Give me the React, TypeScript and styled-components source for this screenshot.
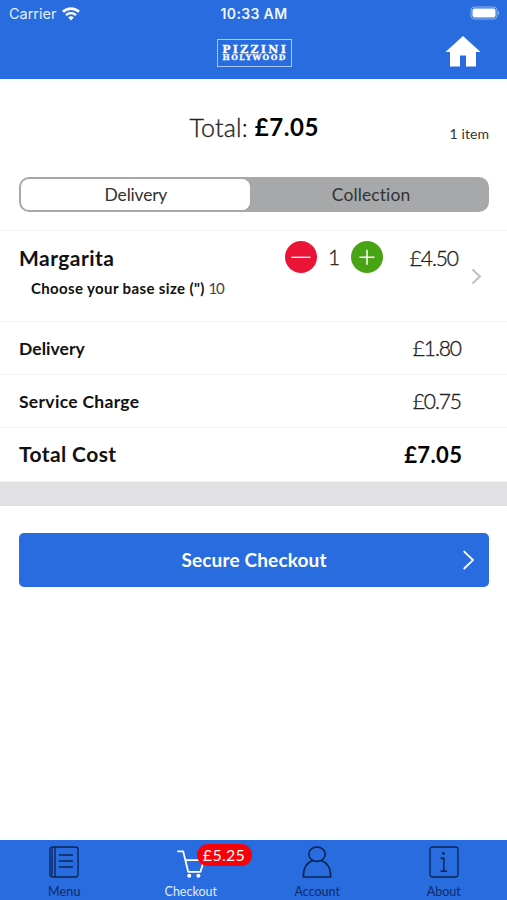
import React from "react";
import styled, { createGlobalStyle } from "styled-components";

const blue = "#286cdf";

const GlobalStyle = createGlobalStyle`
  * { box-sizing: border-box; }
  body { margin: 0; background: #fff; font-family: Lato, "Open Sans", sans-serif; color: #111; }
  button { font: inherit; color: inherit; border: 0; padding: 0; background: none; }
`;

const Screen = styled.div`
  width: 507px;
  height: 900px;
  display: flex;
  flex-direction: column;
  overflow: hidden;
`;

const Header = styled.header`
  height: 79px;
  background: ${blue};
  color: #fff;
`;

const StatusBar = styled.div`
  height: 27px;
  display: grid;
  grid-template-columns: 1fr auto 1fr;
  align-items: center;
  padding: 0 7px 0 9px;
  font: 500 14.5px/27px Inter, sans-serif;
`;

const Carrier = styled.span`
  display: flex;
  align-items: center;
  gap: 6px;
  font-weight: 400;
  letter-spacing: -0.02px;
  color: #e6effd;
`;

const Clock = styled.span`
  font-weight: 600;
  font-size: 14px;
  letter-spacing: 0.35px;
  margin-right: 1px;
  color: #f0f5ff;
`;

const Battery = styled.svg`
  justify-self: end;
  margin-top: -1px;
`;

const TitleBar = styled.div`
  height: 52px;
  display: grid;
  grid-template-columns: 1fr auto 1fr;
  align-items: start;
  padding: 8px 26px 0 27px;
`;

const Logo = styled.div`
  grid-column: 2;
  width: 75px;
  height: 28px;
  margin-top: 4px;
  border: 1px solid #a9c8fa;
  display: flex;
  flex-direction: column;
  align-items: center;
  padding-top: 5px;
  font-family: "DejaVu Serif", serif;
  font-weight: 700;
  white-space: nowrap;
  -webkit-text-stroke: 0.3px #fff;
`;

const LogoLine = styled.span<{ $size: number; $spacing: number; $height: number }>`
  font-size: ${(p) => p.$size}px;
  line-height: ${(p) => p.$height}px;
  letter-spacing: ${(p) => p.$spacing}px;
  margin-right: ${(p) => -p.$spacing}px;
`;

const HomeButton = styled.button`
  justify-self: end;
  width: 36px;
  height: 33px;
`;

const Summary = styled.div`
  height: 98px;
  display: grid;
  grid-template-columns: 1fr auto 1fr;
  padding: 34px 18px 0 19px;
`;

const Label = styled.span<{ $size: number; $weight?: number; $spacing?: number; $line?: number; $color?: string }>`
  font-size: ${(p) => p.$size}px;
  font-weight: ${(p) => p.$weight ?? 400};
  letter-spacing: ${(p) => p.$spacing ?? 0}px;
  margin-right: ${(p) => -(p.$spacing ?? 0)}px;
  line-height: ${(p) => p.$line ?? 28}px;
  color: ${(p) => p.$color ?? "#111"};
  white-space: nowrap;
`;

const LightLabel = styled(Label)`
  font-weight: 300;
  -webkit-text-stroke: 0.35px currentColor;
`;

const SummaryTotal = styled.div`
  grid-column: 2;
  display: flex;
  gap: 7px;
`;

const ItemCount = styled.div`
  justify-self: end;
  padding-top: 7px;
`;

const Segments = styled.div`
  height: 35px;
  margin: 0 18px 0 19px;
  padding: 2px;
  display: grid;
  grid-template-columns: 229px 1fr;
  border-radius: 10px;
  background: #a7a8aa;
`;

const Segment = styled.button<{ $active?: boolean }>`
  border-radius: 8px;
  padding-top: 1px;
  padding-left: ${(p) => (p.$active ? 1 : 5)}px;
  background: ${(p) => (p.$active ? "#fff" : "transparent")};
`;

const Basket = styled.section`
  margin-top: 18px;
  border-top: 1px solid #f2f2f2;
`;

const ItemRow = styled.div`
  height: 91px;
  display: grid;
  grid-template-columns: 1fr 98px 76px 23px;
  padding: 0 25px 0 19px;
  border-bottom: 1px solid #f2f2f2;
`;

const ItemText = styled.div`
  display: flex;
  flex-direction: column;
  padding-top: 13px;
`;

const Option = styled.div`
  display: flex;
  gap: 4px;
  padding: 3px 0 0 12px;
`;

const Stepper = styled.div`
  display: flex;
  align-items: center;
  justify-content: space-between;
  height: 32px;
  margin-top: 10px;
`;

const RoundButton = styled.button<{ $color: string }>`
  width: 32px;
  height: 32px;
  border-radius: 50%;
  background: ${(p) => p.$color};
`;

const ItemPrice = styled.div`
  justify-self: end;
  padding-top: 13px;
`;

const RowChevron = styled.svg`
  justify-self: end;
  margin-top: 37px;
`;

const CostRow = styled.div<{ $height: number }>`
  height: ${(p) => p.$height}px;
  display: flex;
  align-items: center;
  justify-content: space-between;
  padding: 0 45px 0 19px;
  border-bottom: 1px solid #f2f2f2;
`;

const CostName = styled(Label)`
  padding-top: 1px;
`;

const TotalName = styled(Label)`
  padding-bottom: 1px;
`;

const Divider = styled.div`
  height: 24px;
  background: #e1e1e3;
`;

const CheckoutButton = styled.button`
  height: 54px;
  margin: 27px 18px 0 19px;
  padding: 0 14px;
  display: grid;
  grid-template-columns: 1fr auto 1fr;
  align-items: center;
  border-radius: 5px;
  background: ${blue};
`;

const ButtonLabel = styled(Label)`
  grid-column: 2;
`;

const ButtonChevron = styled.svg`
  justify-self: end;
`;

const TabBar = styled.nav`
  height: 60px;
  margin-top: auto;
  display: grid;
  grid-template-columns: repeat(4, 1fr);
  padding: 0 0 0 1px;
  background: ${blue};
`;

const Tab = styled.button<{ $active?: boolean }>`
  position: relative;
  display: flex;
  flex-direction: column;
  align-items: center;
  padding-top: 6px;
  color: ${(p) => (p.$active ? "#fff" : "#0b2454")};
`;

const TabLabel = styled.span<{ $spacing: number }>`
  margin-top: 6px;
  font-size: 12.5px;
  line-height: 16px;
  letter-spacing: ${(p) => p.$spacing}px;
  margin-right: ${(p) => -p.$spacing}px;
  opacity: 0.88;
`;

const Badge = styled.span`
  position: absolute;
  left: 69px;
  top: 4px;
  width: 55px;
  height: 22px;
  border-radius: 11px;
  background: #f80008;
  color: #fff;
  font-size: 16px;
  line-height: 21px;
  letter-spacing: 0.3px;
  text-align: center;
`;

const WifiIcon = () => (
  <svg width="18" height="14" viewBox="0 0 18 14" fill="none" stroke="#fff">
    <path d="M1 4.7a11.7 11.7 0 0 1 16 0" strokeWidth="2.7" />
    <path d="M4 8.1a7.3 7.3 0 0 1 10 0" strokeWidth="2.4" />
    <path d="M6.2 10.6 9 13.6 11.8 10.6a4.2 4.2 0 0 0-5.6 0Z" fill="#fff" stroke="none" />
  </svg>
);

const MenuIcon = () => (
  <svg width="30" height="32" viewBox="0 0 30 32" fill="none" stroke="currentColor" strokeWidth="1.3" strokeLinecap="round">
    <rect x="1" y="1" width="28" height="30" rx="2.5" />
    <path d="M3 3v26M6 1v30M10.5 9h13M10.5 15h13M10.5 21h13" />
  </svg>
);

const CartIcon = () => (
  <svg width="30" height="32" viewBox="0 0 30 32" fill="none" stroke="currentColor" strokeWidth="1.8" strokeLinejoin="round">
    <path d="M1.3 5.4h5.9l5 20.4h12.2l4-12.1M8.9 14.2h18" />
    <circle cx="13.2" cy="29.8" r="2" fill="currentColor" stroke="none" />
    <circle cx="22.4" cy="29.8" r="2" fill="currentColor" stroke="none" />
  </svg>
);

const AccountIcon = () => (
  <svg width="30" height="32" viewBox="0 0 30 32" fill="none" stroke="currentColor" strokeWidth="1.6" strokeLinejoin="round">
    <ellipse cx="15" cy="8.2" rx="8.2" ry="7.2" />
    <path d="M10.8 14.4C4.5 16.4 1.3 21 1.3 31h27.4c0-10-3.2-14.6-9.5-16.6" />
  </svg>
);

const AboutIcon = () => (
  <svg width="30" height="32" viewBox="0 0 30 32" fill="none" stroke="currentColor" strokeWidth="1.3">
    <rect x="1" y="1" width="28" height="30" rx="2.5" />
    <path d="M11.5 12.3h3.3v12.9M11.5 25.2h6.6" strokeWidth="1.5" />
    <circle cx="14.4" cy="7.4" r="1.4" fill="currentColor" stroke="none" />
  </svg>
);

const costs = [
  { name: "Delivery", price: "£1.80", height: 53, spacing: 0.05 },
  { name: "Service Charge", price: "£0.75", height: 53, spacing: 0.3 },
];

export default function App() {
  return (
    <Screen>
      <GlobalStyle />
      <Header>
        <StatusBar>
          <Carrier>Carrier <WifiIcon /></Carrier>
          <Clock>10:33 AM</Clock>
          <Battery width="30" height="14" viewBox="0 0 30 14">
            <rect x="1" y="1" width="26" height="12" rx="3.5" fill="none" stroke="#94b8f3" />
            <rect x="2.5" y="2.5" width="23" height="9" rx="2" fill="#fff" />
            <path d="M28 4.5q2 2.5 0 5z" fill="#94b8f3" />
          </Battery>
        </StatusBar>
        <TitleBar>
          <Logo>
            <LogoLine $size={11} $spacing={2.3} $height={9}>PIZZINI</LogoLine>
            <LogoLine $size={7.6} $spacing={1.5} $height={8}>HOLYWOOD</LogoLine>
          </Logo>
          <HomeButton aria-label="Home">
            <svg width="36" height="33" viewBox="0 0 36 33" fill="#fff">
              <path d="M18 1 35.5 17H31v14.5H21V20.5h-6v11H5V17H.5Z" />
            </svg>
          </HomeButton>
        </TitleBar>
      </Header>

      <Summary>
        <SummaryTotal>
          <LightLabel $size={25} $spacing={0.2} $color="#222">Total:</LightLabel>
          <Label $size={24} $weight={700} $spacing={0.6} $color="#000">£7.05</Label>
        </SummaryTotal>
        <ItemCount><Label $size={14} $spacing={0.1} $color="#333">1 item</Label></ItemCount>
      </Summary>

      <Segments>
        <Segment $active><Label $size={17.5} $spacing={-0.2} $color="#333">Delivery</Label></Segment>
        <Segment><Label $size={17.5} $spacing={0.1} $color="#333">Collection</Label></Segment>
      </Segments>

      <Basket>
        <ItemRow>
          <ItemText>
            <Label $size={21} $weight={700} $spacing={0.45}>Margarita</Label>
            <Option>
              <Label $size={15} $weight={700} $line={26} $spacing={0.37}>Choose your base size (")</Label>
              <Label $size={15} $line={26} $spacing={-1} $color="#444">10</Label>
            </Option>
          </ItemText>
          <Stepper>
            <RoundButton $color="#e91436" aria-label="Remove one">
              <svg width="32" height="32" stroke="#fff" strokeWidth="1.3"><path d="M6.5 16.3h19" /></svg>
            </RoundButton>
            <LightLabel $size={21} $color="#222">1</LightLabel>
            <RoundButton $color="#48a415" aria-label="Add one">
              <svg width="32" height="32" stroke="#fff" strokeWidth="1.5"><path d="M8.5 16.2h15M16 8.7v15" /></svg>
            </RoundButton>
          </Stepper>
          <ItemPrice><LightLabel $size={21} $spacing={-1.1} $color="#222">£4.50</LightLabel></ItemPrice>
          <RowChevron width="11" height="17" viewBox="0 0 11 17" fill="none" stroke="#bfbfbf" strokeWidth="2">
            <path d="m1.5 1.5 7.5 7-7.5 7" />
          </RowChevron>
        </ItemRow>
        {costs.map((cost) => (
          <CostRow key={cost.name} $height={cost.height}>
            <CostName $size={17.5} $weight={700} $spacing={cost.spacing}>{cost.name}</CostName>
            <LightLabel $size={21} $spacing={-1.1} $color="#222">{cost.price}</LightLabel>
          </CostRow>
        ))}
        <CostRow $height={54}>
          <TotalName $size={21} $weight={700} $spacing={0.4}>Total Cost</TotalName>
          <Label $size={22} $weight={700} $spacing={0.4} $color="#000">£7.05</Label>
        </CostRow>
        <Divider />
      </Basket>

      <CheckoutButton>
        <ButtonLabel $size={19} $weight={700} $spacing={0.15} $color="#fff">Secure Checkout</ButtonLabel>
        <ButtonChevron width="13" height="20" viewBox="0 0 13 20" fill="none" stroke="#fff" strokeWidth="1.8">
          <path d="m1.7 1.2 9.3 8.9L1.7 19" />
        </ButtonChevron>
      </CheckoutButton>

      <TabBar>
        <Tab><MenuIcon /><TabLabel $spacing={0.1}>Menu</TabLabel></Tab>
        <Tab $active><CartIcon /><TabLabel $spacing={0}>Checkout</TabLabel><Badge>£5.25</Badge></Tab>
        <Tab><AccountIcon /><TabLabel $spacing={0}>Account</TabLabel></Tab>
        <Tab><AboutIcon /><TabLabel $spacing={0}>About</TabLabel></Tab>
      </TabBar>
    </Screen>
  );
}
